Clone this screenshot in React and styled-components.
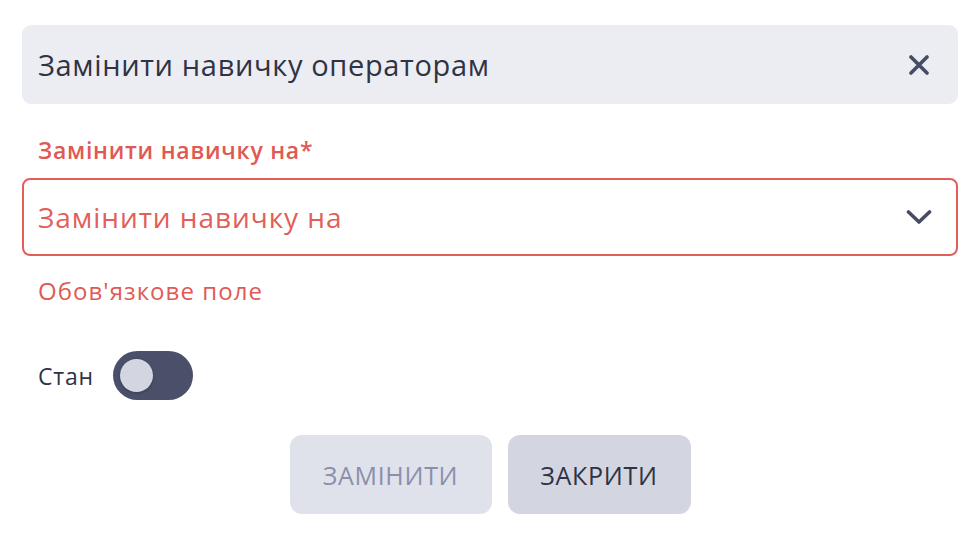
import React from "react";
import styled, { createGlobalStyle } from "styled-components";

const Global = createGlobalStyle`
  html, body { margin: 0; padding: 0; background: #ffffff; }
  body { font-family: "Open Sans", "Noto Sans", sans-serif; }
  * { box-sizing: border-box; }
`;

const Page = styled.div`
  padding: 25px 22px 0 22px;
  display: flex;
  flex-direction: column;
`;

const Header = styled.div`
  height: 79px;
  background: #ecedf2;
  border-radius: 9px;
  display: flex;
  align-items: center;
  justify-content: space-between;
  padding: 0 28px 0 16px;
`;

const Title = styled.h1`
  margin: 0;
  font-size: 29px;
  font-weight: 500;
  color: #2f3344;
  letter-spacing: 0.65px;
`;

const IconButton = styled.button`
  border: 0;
  background: transparent;
  padding: 0;
  width: 22px;
  height: 22px;
  display: flex;
  align-items: center;
  justify-content: center;
  cursor: pointer;
`;

const Label = styled.label`
  margin-top: 30px;
  padding-left: 16px;
  font-size: 23px;
  font-weight: 600;
  color: #df5a54;
  line-height: 32px;
  letter-spacing: 0.75px;
`;

const Select = styled.div`
  margin-top: 12px;
  height: 78px;
  border: 2px solid #e25f59;
  border-radius: 8px;
  display: flex;
  align-items: center;
  justify-content: space-between;
  padding: 0 24px 0 14px;
`;

const Placeholder = styled.span`
  font-size: 28px;
  color: #e25f59;
  letter-spacing: 0.95px;
`;

const ErrorText = styled.div`
  margin-top: 19px;
  padding-left: 16px;
  font-size: 24px;
  color: #df5a54;
  line-height: 32px;
  letter-spacing: 1.05px;
`;

const Row = styled.div`
  margin-top: 44px;
  padding-left: 16px;
  display: flex;
  align-items: center;
  gap: 19px;
`;

const RowLabel = styled.span`
  font-size: 23px;
  color: #2f3344;
  letter-spacing: 0.8px;
`;

const Track = styled.div`
  width: 80px;
  height: 49px;
  border-radius: 25px;
  background: #4a5069;
  display: flex;
  align-items: center;
  padding-left: 7px;
`;

const Knob = styled.div`
  width: 33px;
  height: 33px;
  border-radius: 50%;
  background: #d3d5e1;
  box-shadow: 0 1px 3px rgba(0, 0, 0, 0.25);
`;

const Actions = styled.div`
  margin-top: 35px;
  display: flex;
  justify-content: center;
  gap: 16px;
`;

const Button = styled.button`
  height: 79px;
  width: ${(p) => p.$w}px;
  border: 0;
  border-radius: 12px;
  background: ${(p) => (p.$primary ? "#e0e2eb" : "#d3d5e1")};
  color: ${(p) => (p.$primary ? "#8a90ab" : "#2e3344")};
  font-family: "Open Sans", "Noto Sans", sans-serif;
  font-size: 25px;
  font-weight: 500;
  text-transform: uppercase;
  letter-spacing: 0.7px;
  cursor: pointer;
`;

export default function App() {
  return (
    <>
      <Global />
      <Page>
        <Header>
          <Title>Замінити навичку операторам</Title>
          <IconButton aria-label="close">
            <svg width="20" height="20" viewBox="0 0 20 20">
              <path d="M2 2 L18 18 M18 2 L2 18" stroke="#464c63" strokeWidth="3.6" strokeLinecap="round" />
            </svg>
          </IconButton>
        </Header>
        <Label>Замінити навичку на*</Label>
        <Select>
          <Placeholder>Замінити навичку на</Placeholder>
          <svg width="26" height="16" viewBox="0 0 26 16">
            <path d="M2.5 3 L13 13 L23.5 3" stroke="#464c63" strokeWidth="3.6" fill="none" strokeLinecap="round" strokeLinejoin="round" />
          </svg>
        </Select>
        <ErrorText>Обов'язкове поле</ErrorText>
        <Row>
          <RowLabel>Стан</RowLabel>
          <Track>
            <Knob />
          </Track>
        </Row>
        <Actions>
          <Button $primary $w={202}>Замінити</Button>
          <Button $w={183}>Закрити</Button>
        </Actions>
      </Page>
    </>
  );
}
